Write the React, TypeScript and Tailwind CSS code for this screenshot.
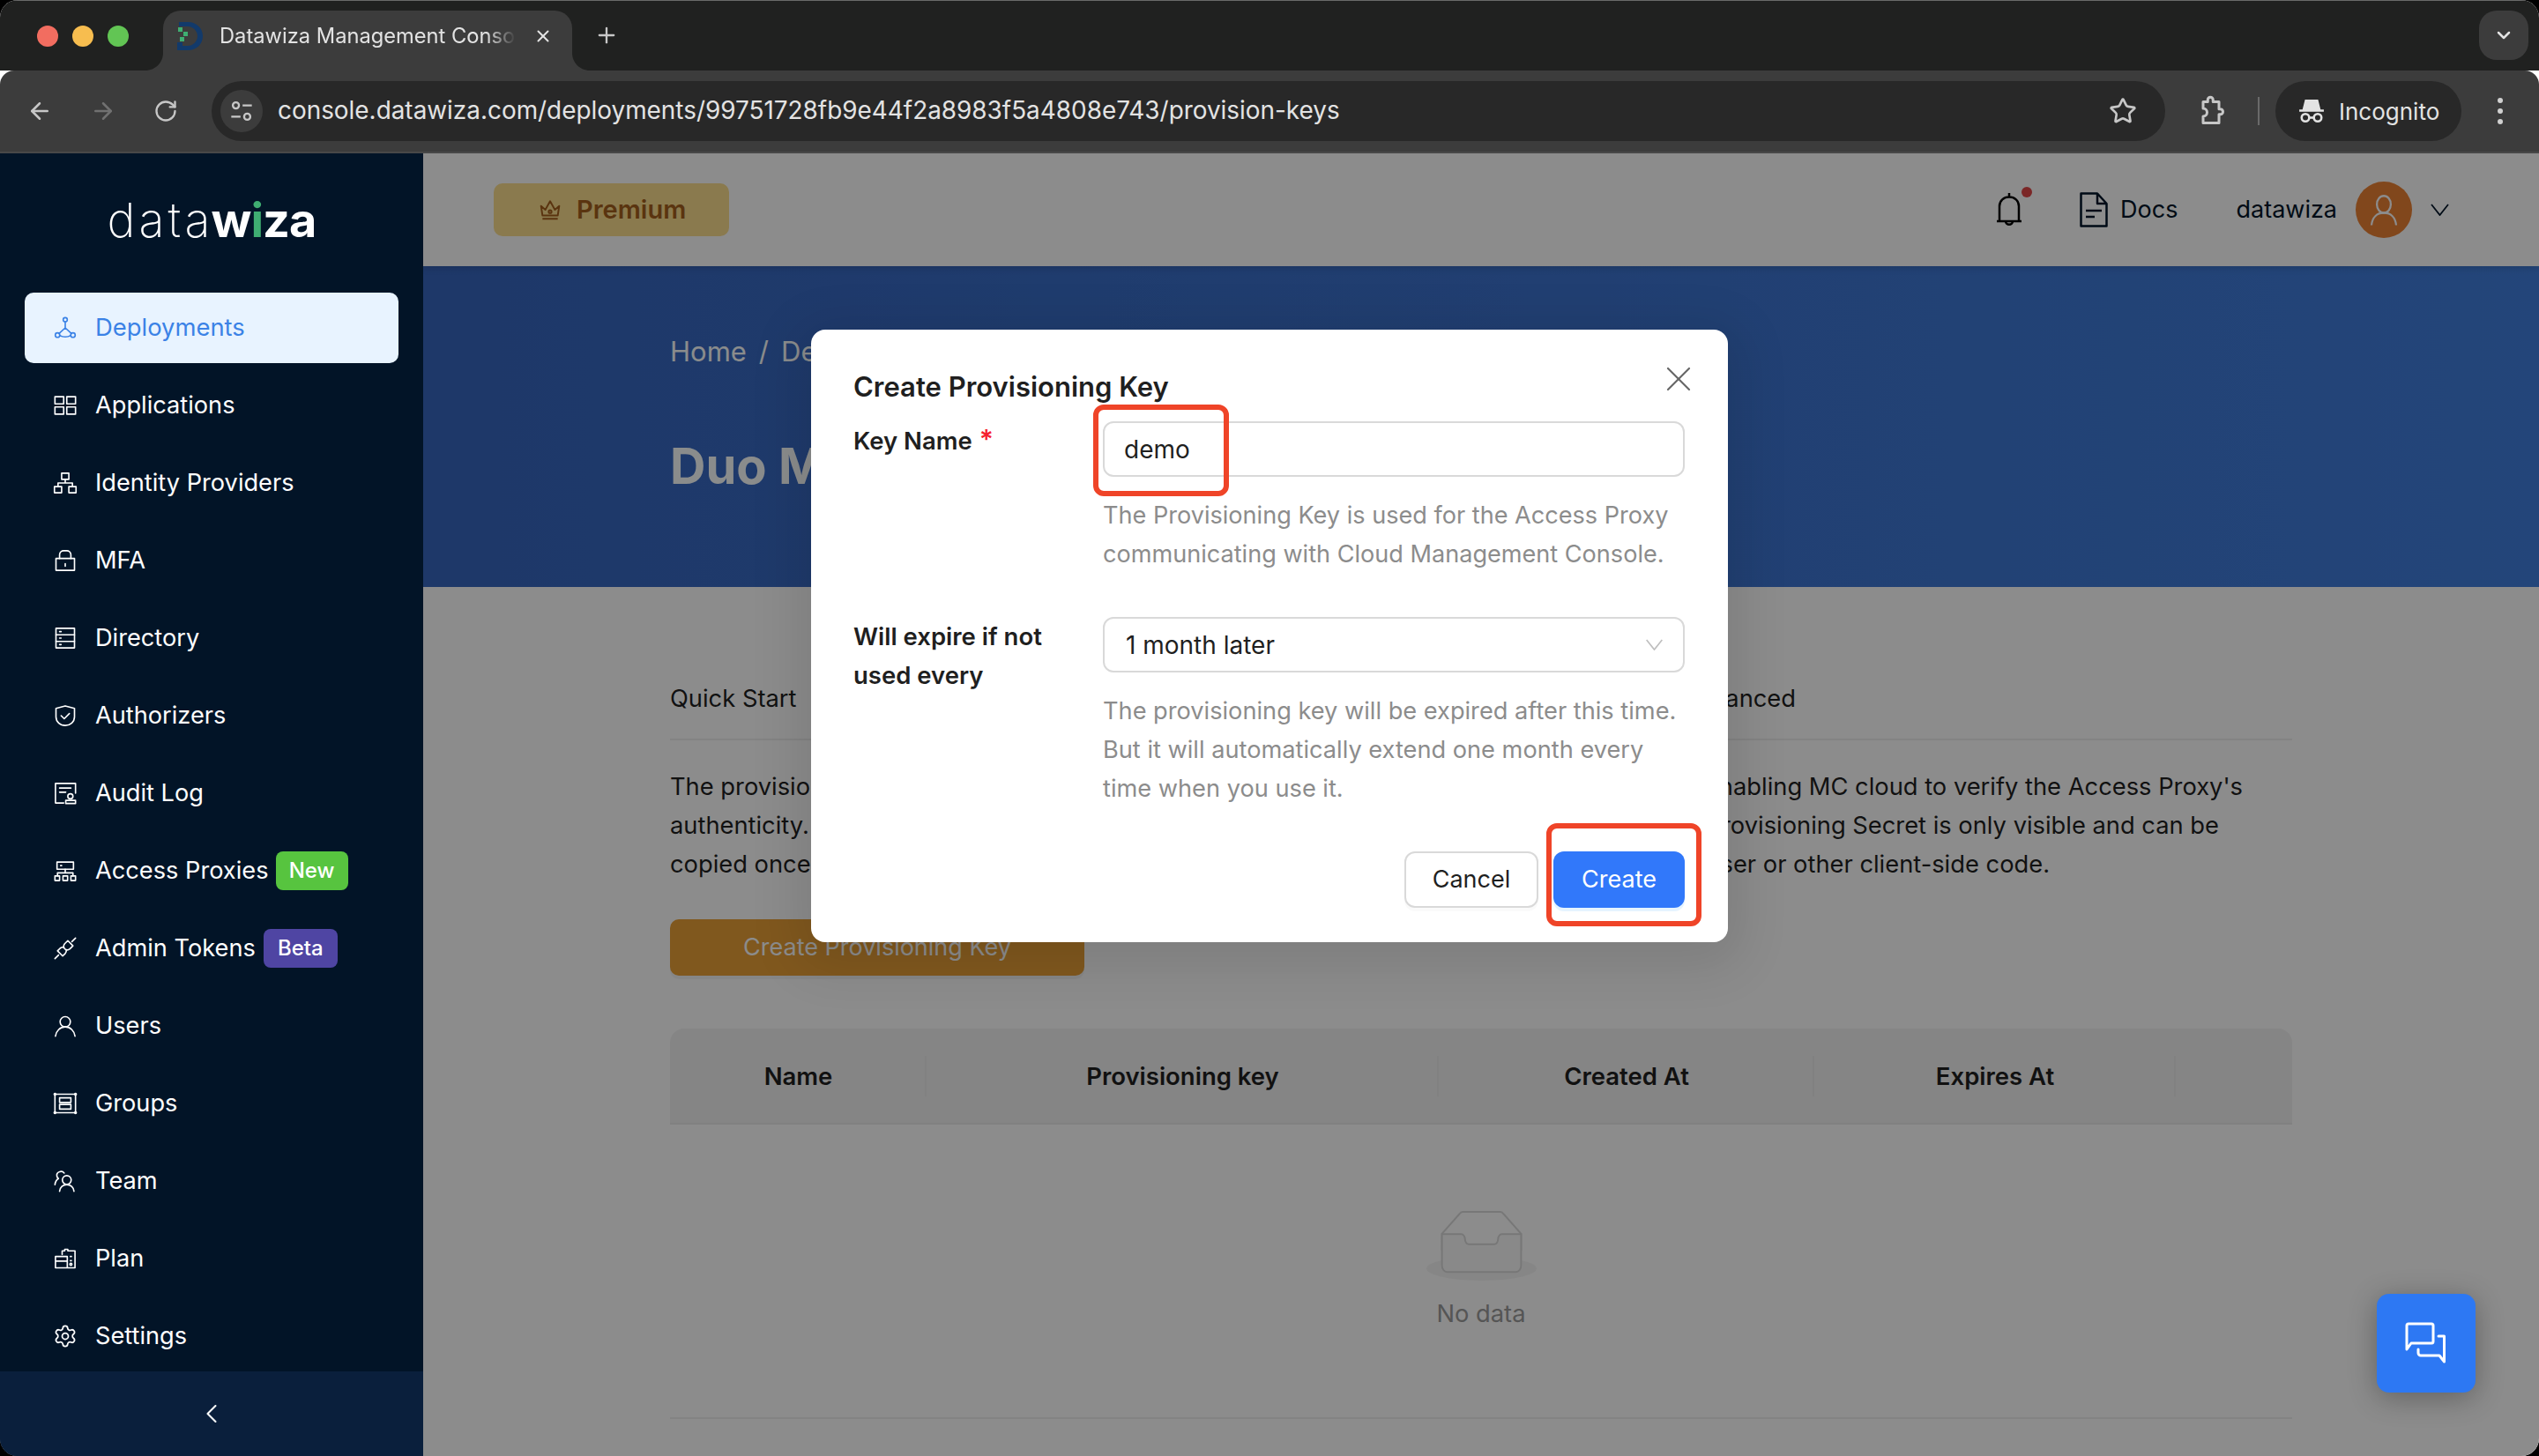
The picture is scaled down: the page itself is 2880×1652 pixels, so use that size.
import type { ReactNode } from 'react'
import { ArrowLeft, ArrowRight, RotateCw, Star, X, Plus, ChevronDown, ChevronLeft, Settings } from 'lucide-react'

function Ico({ children, vb = '0 0 24 24' }: { children: ReactNode; vb?: string }) {
  return (
    <svg viewBox={vb} className="w-[28px] h-[28px]" fill="none" stroke="currentColor" strokeWidth="1.4" strokeLinecap="round" strokeLinejoin="round">
      {children}
    </svg>
  )
}

function Vee({ className }: { className: string }) {
  return (
    <svg viewBox="0 0 21 14" className={className} fill="none" stroke="currentColor" strokeWidth="1.800">
      <path d="M1 1l9.500 12L20 1" />
    </svg>
  )
}

const icons: Record<string, ReactNode> = {
  deploy: (
    <Ico>
      <circle cx="12" cy="4" r="2" />
      <circle cx="4.500" cy="19" r="2.200" />
      <circle cx="19.500" cy="19" r="2.200" />
      <path d="M12 6v6M12 12l-6 5.500M12 12l6 5.500M6.700 19.500c3 1.600 7.600 1.600 10.600 0" />
    </Ico>
  ),
  apps: (
    <Ico>
      <rect x="2" y="3.500" width="8.500" height="7" />
      <rect x="13.500" y="3.500" width="8.500" height="7" />
      <rect x="2" y="13.500" width="8.500" height="7" />
      <rect x="13.500" y="13.500" width="8.500" height="7" />
    </Ico>
  ),
  idp: (
    <Ico>
      <rect x="8.500" y="2.500" width="7" height="6" />
      <rect x="1.500" y="15.500" width="7" height="6" />
      <rect x="15.500" y="15.500" width="7" height="6" />
      <path d="M12 8.500v3.500M5 15.500V12h14v3.500" />
    </Ico>
  ),
  lock: (
    <Ico>
      <rect x="3" y="10" width="18" height="11.500" />
      <path d="M6.500 10V6.500C6.500 4 8.500 2.500 10.500 2.500h3c2 0 4 1.500 4 4V10M12 15v2.500" />
    </Ico>
  ),
  dir: (
    <Ico>
      <rect x="3" y="2.500" width="18" height="19" />
      <path d="M3 8.800h18M3 15.200h18M6.500 5.700h1.500M6.500 12h1.500M6.500 18.300h1.500" />
    </Ico>
  ),
  shield: (
    <Ico>
      <path d="M12 2.500l9 2.500v8c0 5-4 8.500-9 8.500s-9-3.500-9-8.500V5z" />
      <path d="M8 12l3 3 5-5" />
    </Ico>
  ),
  audit: (
    <Ico>
      <path d="M22 12V2.500H2.500v19h8" />
      <path d="M6.500 7h11M6.500 11h6" />
      <circle cx="17" cy="15" r="2.500" />
      <rect x="12.500" y="19" width="9.500" height="3" />
    </Ico>
  ),
  proxy: (
    <Ico>
      <rect x="4" y="3.500" width="16" height="7" />
      <path d="M7.500 7h1M12 10.500V14M4.500 17v-3h15v3" />
      <rect x="2" y="17" width="4.500" height="4.500" />
      <rect x="9.800" y="17" width="4.500" height="4.500" />
      <rect x="17.500" y="17" width="4.500" height="4.500" />
    </Ico>
  ),
  plug: (
    <Ico>
      <path d="M22 2l-3.500 3.500M2 22l3.500-3.500" />
      <path d="M14.500 4.500l5 5-3 3c-1.500 1.300-3.500 1.300-5 0-1.300-1.500-1.300-3.500 0-5z" />
      <path d="M9.500 19.500l-5-5 2.500-2.500c1.200-1 2.200-1.200 3.200-1M9.500 19.500l2.500-2.500c1-1.200 1.200-2.200 1-3.200" />
    </Ico>
  ),
  user: (
    <Ico>
      <circle cx="12" cy="8" r="5" />
      <path d="M2.500 22c.5-5 4.500-9 9.500-9s9 4 9.500 9" />
    </Ico>
  ),
  groups: (
    <Ico>
      <rect x="2" y="3" width="20" height="18" />
      <rect x="6.500" y="6.500" width="11" height="4.500" />
      <rect x="6.500" y="13" width="11" height="4.500" />
      <circle cx="2" cy="3" r=".8" />
      <circle cx="22" cy="3" r=".8" />
      <circle cx="2" cy="21" r=".8" />
      <circle cx="22" cy="21" r=".8" />
    </Ico>
  ),
  team: (
    <Ico>
      <circle cx="13.500" cy="11" r="4.300" />
      <path d="M6.500 22c.3-4 3.300-6.500 7-6.500s6.700 2.500 7 6.500" />
      <path d="M11 4.200A4 4 0 0 0 6.500 3c-2 .6-3 2.300-2.600 4.300.2 1 .8 1.700 1.500 2.300C3.500 10.800 2.300 13 2 15.500" />
    </Ico>
  ),
  plan: (
    <Ico>
      <path d="M9 8V4.500h2.500V3h3v1.500H21.500V21H2.500V10H14v11M2.500 14.500H14M17 10h1M17 14h1" />
      <circle cx="17.500" cy="17.500" r="1" />
    </Ico>
  ),
}

const navItems = [
  { label: 'Applications', icon: 'apps' },
  { label: 'Identity Providers', icon: 'idp' },
  { label: 'MFA', icon: 'lock' },
  { label: 'Directory', icon: 'dir' },
  { label: 'Authorizers', icon: 'shield' },
  { label: 'Audit Log', icon: 'audit' },
  { label: 'Access Proxies', icon: 'proxy', badge: 'New', badgeClass: 'bg-[#57c43f] w-[82px] ml-[8px]' },
  { label: 'Admin Tokens', icon: 'plug', badge: 'Beta', badgeClass: 'bg-[#4f45a3] w-[84px] ml-[9px]' },
  { label: 'Users', icon: 'user' },
  { label: 'Groups', icon: 'groups' },
  { label: 'Team', icon: 'team' },
  { label: 'Plan', icon: 'plan' },
  { label: 'Settings', icon: 'settings' },
]

function Sidebar() {
  return (
    <aside className="w-[480px] shrink-0 bg-[#021427] flex flex-col relative z-10">
      <div className="h-[158px] shrink-0 pb-[6px] flex items-center justify-center text-white text-[54px] leading-none">
        <span className="font-extralight tracking-[4px]">data</span>
        <span className="font-bold tracking-[-1px] -ml-[3px]">w</span>
        <span className="font-bold text-[#3fae72] tracking-[-1px]">i</span>
        <span className="font-bold tracking-[-1px]">za</span>
      </div>
      <div className="mx-[28px] h-[80px] shrink-0 rounded-[10px] bg-[#e8f3ff] text-[#3b82e6] flex items-center pl-[32px] gap-[20px] text-[27.4px]">
        {icons.deploy}
        <span>Deployments</span>
      </div>
      <nav className="flex-1 min-h-0 flex flex-col mt-[4px] text-[27.2px] text-white">
        {navItems.map((item) => (
          <div key={item.label} className="h-[88px] flex items-center pl-[60px] shrink-0">
            <span className="w-[48px] shrink-0">
              {item.icon === 'settings' ? <Settings className="w-[28px] h-[28px]" strokeWidth={1.5} /> : icons[item.icon]}
            </span>
            <span>{item.label}</span>
            {item.badge && (
              <span className={`${item.badgeClass} h-[44px] rounded-[8px] flex items-center justify-center text-[24px] font-medium`}>
                {item.badge}
              </span>
            )}
          </div>
        ))}
      </nav>
      <div className="h-[96px] shrink-0 bg-[#0a1f3c] flex items-center justify-center text-white">
        <ChevronLeft className="w-[36px] h-[36px]" strokeWidth={1.4} />
      </div>
    </aside>
  )
}

function BrowserChrome() {
  return (
    <>
      {/* tab strip */}
      <div className="h-[80px] bg-[#202120] relative flex items-start border-t border-[#6a6a6a] shrink-0">
        <div className="flex gap-[16px] ml-[42px] mt-[28px]">
          <span className="w-[24px] h-[24px] rounded-full bg-[#f26d60]" />
          <span className="w-[24px] h-[24px] rounded-full bg-[#f7bd4f]" />
          <span className="w-[24px] h-[24px] rounded-full bg-[#62c554]" />
        </div>
        <div className="ml-[39px] mt-[11px] w-[464px] h-[68px] bg-[#3c3c3c] rounded-t-[20px] flex items-center pl-[16px] pb-[10px] relative text-[#e3e3e3]">
          <svg viewBox="0 0 30 32" className="w-[30px] h-[32px] shrink-0">
            <path d="M2 0h10c10 0 17 7 17 16s-7 16-17 16H0v-9h6v4h6c6 0 11-5 11-11S18 5 12 5H2z" fill="#123a6b" />
            <rect x="1" y="6" width="5" height="5" fill="#3fae72" />
            <rect x="7" y="11" width="5" height="5" fill="#3fae72" />
            <rect x="3" y="17" width="5" height="5" fill="#3fae72" />
          </svg>
          <span className="ml-[18px] w-[336px] whitespace-nowrap text-[23.700px] [mask-image:linear-gradient(to_right,black_90%,transparent)]">
            Datawiza Management Conso
          </span>
          <X className="absolute left-[420px] top-[18px] w-[22px] h-[22px]" strokeWidth={2.2} />
          <svg viewBox="0 0 20 20" className="absolute -left-[20px] bottom-0 w-[20px] h-[20px]"><path d="M20 0v20H0c11 0 20-9 20-20z" fill="#3c3c3c" /></svg>
          <svg viewBox="0 0 20 20" className="absolute -right-[20px] bottom-0 w-[20px] h-[20px]"><path d="M0 0v20h20C9 20 0 11 0 0z" fill="#3c3c3c" /></svg>
        </div>
        <Plus className="ml-[25px] mt-[25px] w-[28px] h-[28px] text-[#c8c8c8]" strokeWidth={2} />
        <div className="ml-auto mr-[12px] mt-[11px] w-[56px] h-[56px] rounded-[20px] bg-[#3c3c3c] flex items-center justify-center text-[#e3e3e3]">
          <ChevronDown className="w-[24px] h-[24px]" strokeWidth={2.5} />
        </div>
      </div>
      {/* toolbar */}
      <div className="h-[94px] bg-[#3c3c3c] rounded-t-[16px] flex items-center text-[#c7c7c7] border-b-2 border-[#484848] shrink-0">
        <ArrowLeft className="ml-[30px] w-[30px] h-[30px]" strokeWidth={2} />
        <ArrowRight className="ml-[42px] w-[30px] h-[30px] text-[#717171]" strokeWidth={2} />
        <RotateCw className="ml-[42px] w-[28px] h-[28px]" strokeWidth={2} />
        <div className="ml-[38px] w-[2216px] h-[68px] rounded-full bg-[#282828] flex items-center pl-[10px] pr-[32px]">
          <span className="w-[48px] h-[48px] rounded-full bg-[#3c3c3c] flex items-center justify-center">
            <svg viewBox="0 0 24 24" className="w-[28px] h-[28px]" fill="none" stroke="currentColor" strokeWidth="2">
              <circle cx="6.500" cy="6.500" r="3" />
              <path d="M13 6.500h9M2 17.500h9" />
              <circle cx="17.500" cy="17.500" r="3" />
            </svg>
          </span>
          <span className="ml-[17px] text-[27.900px] text-[#e3e3e3] whitespace-nowrap">
            console.datawiza.com/deployments/99751728fb9e44f2a8983f5a4808e743/provision-keys
          </span>
          <Star className="ml-auto w-[32px] h-[32px]" strokeWidth={2} />
        </div>
        <svg viewBox="0 0 24 24" className="ml-[34px] w-[36px] h-[36px]" fill="none" stroke="currentColor" strokeWidth="2" strokeLinejoin="round">
          <path d="M6 5h3.500V3.500a2 2 0 0 1 4 0V5H18v5.500h1a2 2 0 0 1 0 4h-1V21H6v-5a2.500 2.500 0 0 0 0-6z" />
        </svg>
        <span className="ml-[35px] w-[2px] h-[32px] bg-[#6a6a6a]" />
        <div className="ml-[18px] w-[211px] h-[68px] rounded-full bg-[#282828] flex items-center pl-[26px] text-[#e3e3e3]">
          <svg viewBox="0 0 28 28" className="w-[30px] h-[30px] shrink-0" fill="none" stroke="currentColor" strokeWidth="2.400">
            <path d="M1 13.500h26M5.500 13l2.500-10h12l2.500 10z" fill="currentColor" />
            <circle cx="7.500" cy="21" r="4" />
            <circle cx="20.500" cy="21" r="4" />
            <path d="M11.500 21h5" />
          </svg>
          <span className="ml-[16px] text-[26px]">Incognito</span>
        </div>
        <div className="ml-[41px] flex flex-col gap-[6px]">
          <span className="w-[6px] h-[6px] rounded-full bg-[#d0d0d0]" />
          <span className="w-[6px] h-[6px] rounded-full bg-[#d0d0d0]" />
          <span className="w-[6px] h-[6px] rounded-full bg-[#d0d0d0]" />
        </div>
      </div>
    </>
  )
}

const columns = [
  { label: 'Name', w: 'w-[291px]' },
  { label: 'Provisioning key', w: 'w-[581px]' },
  { label: 'Created At', w: 'w-[426px]' },
  { label: 'Expires At', w: 'w-[410px]' },
  { label: '', w: 'flex-1' },
]

function Content() {
  return (
    <main className="flex-1 relative bg-white flex flex-col min-w-0 overflow-hidden">
      <header className="h-[128px] shrink-0 relative flex items-center pl-[80px] pr-[102px] text-[#001529] bg-white shadow-[0_2px_8px_rgba(0,0,0,0.15)]">
        <div className="w-[267px] h-[60px] rounded-[10px] bg-[#fbde8e] flex items-center pl-[51px] text-[#a4601d] text-[29px] font-semibold gap-[17px]">
          <svg viewBox="0 0 24 24" className="w-[26px] h-[26px]" fill="none" stroke="currentColor" strokeWidth="1.800" strokeLinejoin="round">
            <path d="M2.500 8l4.500 4L12 3l5 9 4.500-4-1.500 10H4zM4 21.500h16" />
            <circle cx="12" cy="14" r="1.500" />
          </svg>
          Premium
        </div>
        <div className="ml-auto relative text-black">
          <svg viewBox="0 0 30 40" className="w-[30px] h-[40px]" fill="none" stroke="currentColor" strokeWidth="2.500" strokeLinejoin="round">
            <path d="M1 33h28M4 33V16C4 9.500 9 5.500 15 5.500S26 9.500 26 16v17M15 1v4.500M11 33c0 5 8 5 8 0" />
          </svg>
          <span className="absolute -right-[11px] -top-[6px] w-[12px] h-[12px] rounded-full bg-[#e04848]" />
        </div>
        <svg viewBox="0 0 32 40" className="ml-[65px] w-[32px] h-[40px]" fill="none" stroke="currentColor" strokeWidth="2.500" strokeLinejoin="round">
          <path d="M1.500 1.500H20L30.500 13v25.500h-29zM20 1.500V13h10.500M7 21h18M7 28h10" />
        </svg>
        <span className="ml-[14px] text-[27px]">Docs</span>
        <span className="ml-[66px] text-[27px]">datawiza</span>
        <div className="ml-[21px] w-[64px] h-[64px] rounded-full bg-[#ec8133] flex items-center justify-center text-white">
          <svg viewBox="0 0 24 24" className="w-[42px] h-[42px]" fill="none" stroke="currentColor" strokeWidth="1.300">
            <ellipse cx="12" cy="8.500" rx="4.500" ry="5.500" />
            <path d="M4 22c.5-5 3.500-8 8-8s7.500 3 8 8" />
          </svg>
        </div>
        <Vee className="ml-[21px] w-[21px] h-[14px]" />
      </header>

      <section className="h-[364px] shrink-0 bg-gradient-to-r from-[#3766bf] to-[#417fde] pl-[280px] pt-[75px] text-[#fbffff]">
        <div className="flex gap-[14px] text-[31px] leading-[44px]">
          <span>Home</span>
          <span>/</span>
          <span>Deployments</span>
        </div>
        <h1 className="mt-[76px] text-[56px] leading-[64px] font-bold whitespace-nowrap">Duo M</h1>
      </section>

      <section className="px-[280px] pt-[105px] text-[#1f1f1f] text-[27.300px] leading-[44px]">
        <div className="h-[69px] border-b-2 border-[#eeeeee] w-full">
          <div className="flex justify-between w-[1277px]">
            <span>Quick Start</span>
            <span>Advanced</span>
          </div>
        </div>
        <div className="mt-[31px]">
          <p className="flex justify-between w-[1784px] whitespace-nowrap"><span>The provisioning</span><span>enabling MC cloud to verify the Access Proxy's</span></p>
          <p className="flex justify-between w-[1757px] whitespace-nowrap"><span>authenticity.</span><span>Provisioning Secret is only visible and can be</span></p>
          <p className="flex justify-between w-[1565px] whitespace-nowrap"><span>copied once</span><span>browser or other client-side code.</span></p>
        </div>
        <button className="mt-[40px] w-[470px] h-[64px] rounded-[10px] bg-[#e9a038] text-white text-[27px] shadow-[0_4px_0_rgba(0,0,0,0.04)]">
          Create Provisioning Key
        </button>

        <div className="mt-[60px] border-b-2 border-[#eeeeee]">
          <div className="h-[109px] bg-[#f3f3f3] rounded-t-[16px] flex items-center border-b-2 border-[#ebebeb] font-semibold text-[27.500px]">
            {columns.map((c, i) => (
              <div key={i} className={`${c.w} h-[46px] flex items-center justify-center pl-[2px] ${i < 4 ? 'border-r-2 border-[#ebebeb]' : ''}`}>
                {c.label}
              </div>
            ))}
          </div>
          <div className="h-[332px] flex flex-col items-center pt-[97px] text-[#9b9b9b]">
            <svg viewBox="0 0 64 41" className="w-[125px] h-[80px]">
              <g transform="translate(0 1)" fill="none" fillRule="evenodd">
                <ellipse fill="#f5f5f5" cx="32" cy="33" rx="32" ry="7" />
                <g fillRule="nonzero" stroke="#d9d9d9">
                  <path d="M55 12.760L44.854 1.258C44.367.474 43.656 0 42.907 0H21.093c-.749 0-1.460.474-1.947 1.257L9 12.761V22h46v-9.240z" />
                  <path d="M41.613 15.931c0-1.605.994-2.930 2.227-2.931H55v18.137C55 33.260 53.680 35 52.050 35h-40.100C10.320 35 9 33.259 9 31.137V13h11.160c1.233 0 2.227 1.323 2.227 2.928v.022c0 1.605 1.005 2.901 2.237 2.901h14.752c1.232 0 2.237-1.308 2.237-2.913v-.007z" fill="#fafafa" />
                </g>
              </g>
            </svg>
            <span className="mt-[16px]">No data</span>
          </div>
        </div>
      </section>

      {/* modal mask, the sidebar stays above it */}
      <div className="absolute inset-0 bg-black/45" />
    </main>
  )
}

function Modal() {
  return (
    <div className="absolute left-[920px] top-[374px] w-[1040px] h-[695px] bg-white rounded-[16px] z-20 pl-[48px] pt-[43px] text-[28px] leading-[44px] text-[#1f1f1f] shadow-[0_12px_56px_16px_rgba(0,0,0,0.1)]">
      <h2 className="text-[31px] font-semibold">Create Provisioning Key</h2>
      <X className="absolute left-[960px] top-[32px] w-[48px] h-[48px] text-[#666666]" strokeWidth={1.1} />
      <div className="mt-[17px] grid grid-cols-[283px_660px]">
        <label className="font-semibold text-[27.500px] h-[44px] flex items-start gap-[8px]">
          <span>Key Name</span>
          <span className="text-[#f5222d] text-[30px] leading-[40px]">*</span>
        </label>
        <div>
          <div className="h-[63px] rounded-[12px] border-2 border-[#d9d9d9] flex items-center pl-[22px]">demo</div>
          <p className="mt-[22px] text-[#8c8c8c] text-[27.100px] whitespace-nowrap">
            The Provisioning Key is used for the Access Proxy<br />communicating with Cloud Management Console.
          </p>
        </div>
      </div>
      <div className="mt-[49px] grid grid-cols-[283px_660px]">
        <label className="font-semibold text-[27.500px]">Will expire if not<br />used every</label>
        <div>
          <div className="h-[63px] rounded-[12px] border-2 border-[#d9d9d9] flex items-center pl-[24px] pr-[22px]">
            <span>1 month later</span>
            <Vee className="ml-auto w-[21px] h-[13px] text-[#bfbfbf]" />
          </div>
          <p className="mt-[22px] text-[#8c8c8c] text-[27.200px] whitespace-nowrap">
            The provisioning key will be expired after this time.<br />But it will automatically extend one month every<br />time when you use it.
          </p>
        </div>
      </div>
      <div className="mt-[49px] w-[943px] flex justify-end gap-[17px] text-[27px]">
        <button className="w-[152px] h-[64px] rounded-[12px] border-2 border-[#d9d9d9] bg-white shadow-[0_4px_0_rgba(0,0,0,0.02)]">Cancel</button>
        <button className="w-[149px] h-[64px] rounded-[12px] bg-[#3178fa] text-white shadow-[0_4px_0_rgba(5,145,255,0.1)]">Create</button>
      </div>
      {/* red annotation boxes */}
      <span className="absolute left-[320px] top-[85px] w-[154px] h-[104px] rounded-[12px] border-[6px] border-[#ef4428]" />
      <span className="absolute left-[834px] top-[560px] w-[176px] h-[117px] rounded-[12px] border-[6px] border-[#ef4428]" />
    </div>
  )
}

export default function App() {
  return (
    <div className="w-[2880px] h-[1652px] bg-black overflow-hidden relative font-[Inter,sans-serif]">
      <div className="w-full h-full rounded-[20px] overflow-hidden flex flex-col bg-white">
        <BrowserChrome />
        <div className="flex-1 flex min-h-0">
          <Sidebar />
          <Content />
        </div>
      </div>
      <Modal />
      <button className="absolute left-[2696px] top-[1468px] w-[112px] h-[112px] rounded-[14px] bg-[#2d78f3] z-20 flex items-center justify-center text-white shadow-[0_6px_32px_rgba(0,0,0,0.3)]">
        <svg viewBox="0 0 48 48" className="w-[48px] h-[48px]" fill="none" stroke="currentColor" strokeWidth="3" strokeLinejoin="round" strokeLinecap="round">
          <path d="M2 31V4a2 2 0 0 1 2-2h26a2 2 0 0 1 2 2v18a2 2 0 0 1-2 2H7z" />
          <path d="M38 16h6.500v29l-5.500-7H18a3 3 0 0 1-3-3v-4" />
        </svg>
      </button>
    </div>
  )
}
